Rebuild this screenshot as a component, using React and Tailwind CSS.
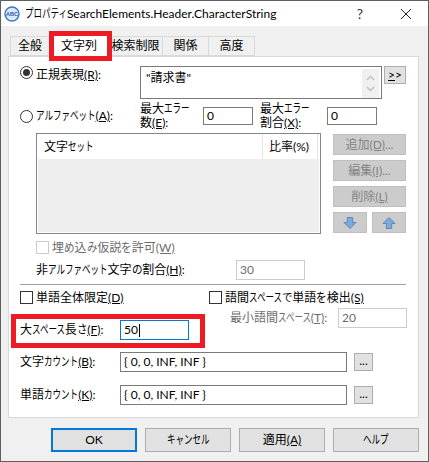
import React from "react";

// The reference's UI font has narrow kana next to full-width kanji.
function J({ children }) {
  const parts = String(children).split(/([ァ-ヶー]+|[ぁ-ん]+)/).filter(Boolean);
  return (
    <>
      {parts.map((p, i) => {
        const kata = /^[ァ-ヶー]/.test(p);
        const hira = /^[ぁ-ん]/.test(p);
        if (!kata && !hira) return <span key={i}>{p}</span>;
        const s = kata ? 0.71 : 0.88;
        return (
          <span
            key={i}
            className={`inline-block origin-left ${kata ? "scale-x-[0.71]" : "scale-x-[0.88]"}`}
            style={{ marginRight: -(p.length * 12 * (1 - s)) }}
          >
            {p}
          </span>
        );
      })}
    </>
  );
}

function U({ children }) {
  return <span className="underline">{children}</span>;
}

function Radio({ checked }) {
  return (
    <span className="flex h-[13px] w-[13px] shrink-0 items-center justify-center rounded-full border border-[#333333] bg-white">
      {checked && <span className="h-[7px] w-[7px] rounded-full bg-[#333333]" />}
    </span>
  );
}

function Check({ disabled }) {
  return (
    <span className={`block h-[13px] w-[13px] shrink-0 border ${disabled ? "border-[#cccccc]" : "border-[#333333]"} bg-white`} />
  );
}

function Field({ className, children, disabled }) {
  return (
    <div className={`flex shrink-0 items-center border px-[3px] text-[12px] leading-none ${disabled ? "border-[#cccccc] text-[#6d6d6d]" : "border-[#7a7a7a] text-black"} bg-white ${className}`}>
      {children}
    </div>
  );
}

function DisabledBtn({ children, className }) {
  return (
    <div className={`flex items-center justify-center border border-[#bfbfbf] bg-[#cccccc] text-[12px] text-[#838383] ${className}`}>
      {children}
    </div>
  );
}

function Arrow({ up }) {
  return (
    <svg width="14" height="14" viewBox="0 0 14 14">
      <path
        d={up ? "M7 1.5 L13 7.5 H9.7 V12.5 H4.3 V7.5 H1 Z" : "M7 12.5 L13 6.5 H9.7 V1.5 H4.3 V6.5 H1 Z"}
        fill="#7fa9dc"
        stroke="#5b87bd"
        strokeWidth="1"
      />
    </svg>
  );
}

function Footer({ children, primary }) {
  return (
    <div className={`flex h-[24px] w-[86px] items-center justify-center bg-[#e1e1e1] text-[12px] text-black ${primary ? "border-2 border-[#0078d7]" : "border border-[#adadad]"}`}>
      {children}
    </div>
  );
}

function Dots() {
  return (
    <div className="ml-[7px] flex h-[18px] w-[19px] items-center justify-center border border-[#adadad] bg-[#e1e1e1] pb-[3px] text-[12px] leading-none text-black">
      ...
    </div>
  );
}

const tabs = [
  { label: "全般", w: "w-[40px]" },
  { label: "文字列", w: "w-[60px]", active: true },
  { label: "検索制限", w: "w-[55px]" },
  { label: "関係", w: "w-[47px]" },
  { label: "高度", w: "w-[47px]" },
];

export default function App() {
  return (
    <div className="relative flex h-[462px] w-[429px] flex-col overflow-hidden whitespace-nowrap border border-[#5f5f5f] bg-[#f0f0f0] font-['Lato','Noto_Sans_CJK_JP',sans-serif] text-[12px] text-black">
      <div className="flex h-[25px] shrink-0 items-center bg-white pl-[3px]">
        <svg width="16" height="16" viewBox="0 0 16 16" className="shrink-0">
          <circle cx="8" cy="8" r="7" fill="#dbe9f8" stroke="#3b78c4" strokeWidth="1.4" />
          <text x="8" y="10" textAnchor="middle" fontSize="5.5" fontWeight="700" fill="#1f5aa8" fontFamily="Liberation Sans">ABC</text>
        </svg>
        <span className="ml-[5px] text-[12px]"><J>プロパティ</J>SearchElements.Header.CharacterString</span>
        <span className="ml-auto text-[14px] text-[#333333]">?</span>
        <svg width="12" height="12" viewBox="0 0 12 12" className="ml-[37px] mr-[16px]">
          <path d="M1 1 L11 11 M11 1 L1 11" stroke="#222222" strokeWidth="1" />
        </svg>
      </div>

      <div className="mt-[10px] flex h-[20px] shrink-0 items-end pl-[9px]">
        {tabs.map((t) => (
          <div
            key={t.label}
            className={`-ml-px flex items-center justify-center border border-[#d9d9d9] text-[12px] first:ml-0 ${t.w} ${t.active ? "relative z-10 h-[22px] border-b-0 bg-white" : "h-[20px] bg-[#f0f0f0]"}`}
          >
            {t.label}
          </div>
        ))}
      </div>

      <div className="ml-[7px] h-[362px] w-[411px] shrink-0 border border-[#d9d9d9] bg-white px-[11px] pt-[9px]">
        <div className="flex h-[33px]">
          <Radio checked />
          <span className="ml-[3px] w-[104px] pt-[2px] leading-[14px]">
            正規表現<U>(R)</U>:
          </span>
          <div className="flex h-[33px] w-[242px] border border-[#7a7a7a] px-[5px] pt-[2px] text-[12px]">
            <span className="flex-1">"請求書"</span>
            <div className="-mr-[3px] flex w-[17px] flex-col items-center justify-between bg-[#f0f0f0] py-[6px]">
              <svg width="9" height="6" viewBox="0 0 9 6"><path d="M1 5 L4.5 1.5 L8 5" fill="none" stroke="#c4c4c4" strokeWidth="1.6" /></svg>
              <svg width="9" height="6" viewBox="0 0 9 6"><path d="M1 1 L4.5 4.5 L8 1" fill="none" stroke="#c4c4c4" strokeWidth="1.6" /></svg>
            </div>
          </div>
          <div className="ml-[2px] flex h-[18px] w-[22px] items-center justify-center border border-[#adadad] bg-[#e1e1e1] text-[12px] leading-none">
            <U>&gt;</U>&gt;
          </div>
        </div>

        <div className="mt-[5px] flex h-[24px] items-center">
          <Radio />
          <span className="ml-[3px] w-[104px]">
            <J>アルファベット</J><U>(A)</U>:
          </span>
          <span className="w-[63px] leading-[14px]">
            最大<J>エラー</J><br />数<U>(E)</U>:
          </span>
          <Field className="h-[18px] w-[50px]">0</Field>
          <span className="ml-[7px] w-[67px] leading-[14px]">
            最大<J>エラー</J><br />割合<U>(X)</U>:
          </span>
          <Field className="h-[18px] w-[50px]">0</Field>
        </div>

        <div className="mt-[5px] flex h-[101px] pl-[16px]">
          <div className="flex w-[285px] flex-col border border-[#828790]">
            <div className="flex h-[25px] shrink-0 items-center bg-white">
              <span className="flex-1 pl-[7px]">文字<J>セット</J></span>
              <span className="flex h-full w-[56px] items-center border-x border-[#e5e5e5] pl-[6px]">比率(%)</span>
              <span className="w-[2px]" />
            </div>
            <div className="mx-px mb-px flex-1 bg-[#eeeeee]" />
          </div>
          <div className="ml-[12px] flex w-[73px] flex-col gap-[5px] pt-px">
            <DisabledBtn className="h-[21px]">追加<U>(D)</U>...</DisabledBtn>
            <DisabledBtn className="h-[21px]">編集<U>(I)</U>...</DisabledBtn>
            <DisabledBtn className="h-[21px]">削除<U>(L)</U></DisabledBtn>
            <div className="flex justify-between">
              <DisabledBtn className="h-[21px] w-[34px]"><Arrow /></DisabledBtn>
              <DisabledBtn className="h-[21px] w-[34px]"><Arrow up /></DisabledBtn>
            </div>
          </div>
        </div>

        <div className="mt-[7px] flex h-[13px] items-center pl-[16px] text-[#6d6d6d]">
          <Check disabled />
          <span className="ml-[3px]"><J>埋め込み仮説を許可</J><U>(W)</U></span>
        </div>

        <div className="mt-[6px] flex h-[20px] items-center pl-[16px]">
          <span className="w-[200px]"><J>非アルファベット文字の割合</J><U>(H)</U>:</span>
          <Field disabled className="h-[20px] w-[69px]">30</Field>
        </div>

        <div className="mt-[4px] h-px w-[386px] bg-[#a0a0a0]" />

        <div className="mt-[6px] flex">
          <div className="w-[189px]">
            <div className="flex h-[13px] items-center">
              <Check />
              <span className="ml-[3px]"><J>単語全体限定</J><U>(D)</U></span>
            </div>
            <div className="mt-[16px] flex h-[20px] items-center">
              <span className="w-[100px]"><J>大スペース長さ</J><U>(F)</U>:</span>
              <div className="flex h-[20px] w-[69px] items-center border border-[#0078d7] px-[3px] leading-none">
                50<span className="ml-px h-[13px] w-px bg-black" />
              </div>
            </div>
          </div>
          <div>
            <div className="flex h-[13px] items-center">
              <Check />
              <span className="ml-[3px]"><J>語間スペースで単語を検出</J><U>(S)</U></span>
            </div>
            <div className="mt-[4px] flex h-[20px] items-center justify-end text-[#6d6d6d]">
              <span className="mr-[4px] ml-[21px] w-[104px]"><J>最小語間スペース</J><U>(T)</U>:</span>
              <Field disabled className="h-[20px] w-[69px]">20</Field>
            </div>
          </div>
        </div>

        <div className="mt-[12px] flex h-[20px] items-center">
          <span className="w-[100px]"><J>文字カウント</J><U>(B)</U>:</span>
          <Field className="h-[20px] w-[227px]">{"{ 0, 0, INF, INF }"}</Field>
          <Dots />
        </div>

        <div className="mt-[13px] flex h-[20px] items-center">
          <span className="w-[100px]"><J>単語カウント</J><U>(K)</U>:</span>
          <Field className="h-[20px] w-[227px]">{"{ 0, 0, INF, INF }"}</Field>
          <Dots />
        </div>
      </div>

      <div className="mt-[10px] flex gap-[8px] pl-[50px]">
        <Footer primary>OK</Footer>
        <Footer><J>キャンセル</J></Footer>
        <Footer>適用<U>(A)</U></Footer>
        <Footer><J>ヘルプ</J></Footer>
      </div>

      <div className="absolute left-[48px] top-[30px] z-20 h-[30px] w-[63px] border-[5px] border-[#ed1c24]" />
      <div className="absolute left-[10px] top-[313px] z-20 h-[34px] w-[194px] border-[5px] border-[#ed1c24]" />
    </div>
  );
}
